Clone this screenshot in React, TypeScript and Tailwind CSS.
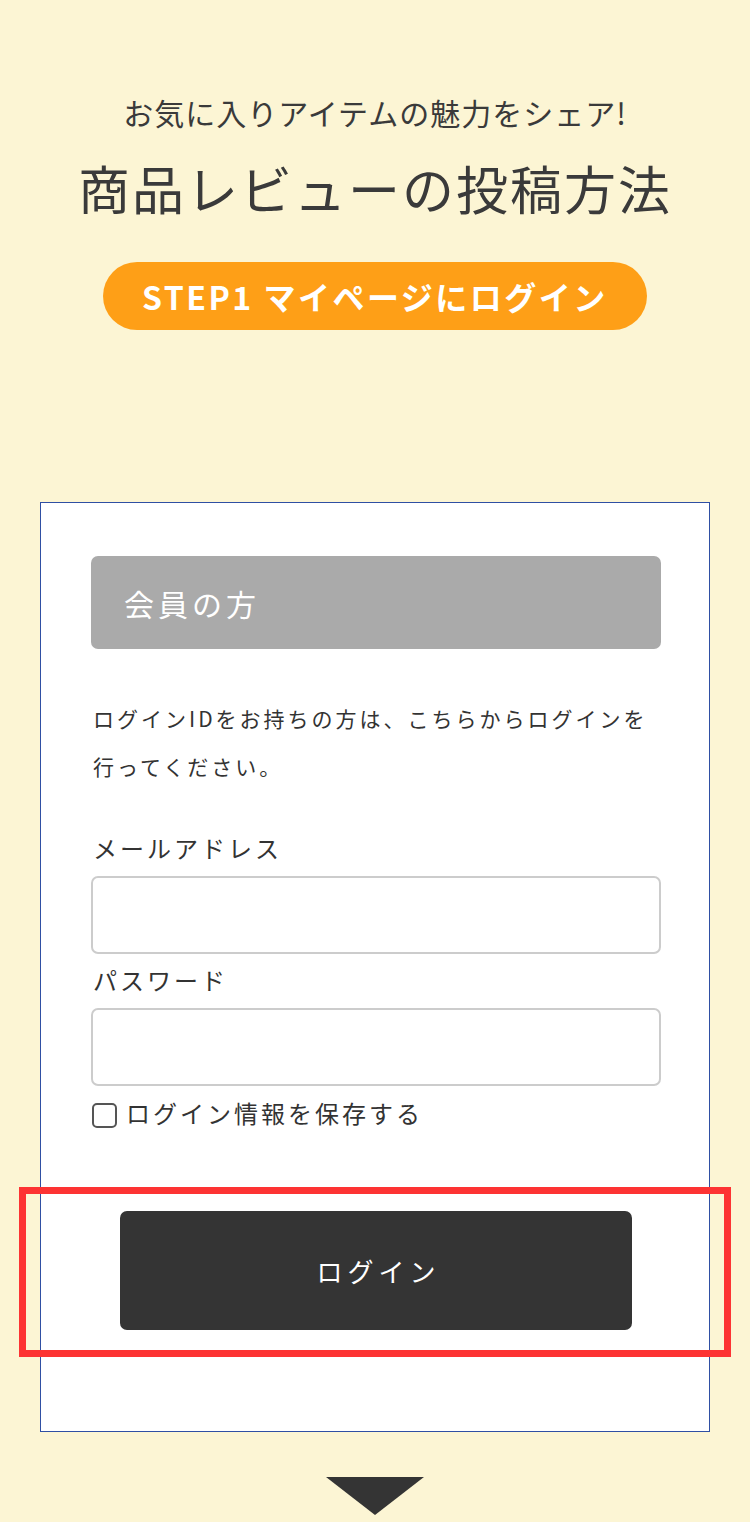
import React from "react";

const sans = { fontFamily: '"Noto Sans CJK JP", "Noto Sans", sans-serif' };

export default function App() {
  return (
    <div
      className="w-[750px] min-h-[1522px] bg-[#fcf5d4] text-[#333] flex flex-col items-center overflow-hidden"
      style={sans}
    >
      <p className="mt-[92px] text-[30px] leading-[40px] tracking-[1px] text-[#3a3a3a]">
        お気に入りアイテムの魅力をシェア!
      </p>
      <h1 className="mt-[22px] text-[52px] leading-[68px] tracking-[2px] text-[#3a3a3a]">
        商品レビューの投稿方法
      </h1>
      <div className="mt-[40px] w-[544px] h-[68px] rounded-full bg-[#fe9f17] flex items-center justify-center">
        <span className="text-white font-bold text-[32px] tracking-[2.5px] leading-none">
          STEP1 マイページにログイン
        </span>
      </div>

      <div className="mt-[172px] w-[670px] bg-white border border-[#2f4fa3] pt-[53px] pl-[50px] pr-[48px] pb-[101px] flex flex-col">
        <div className="h-[93px] rounded-[7px] bg-[#aaaaaa] flex items-center pl-[33px]">
          <span className="text-white text-[30px] tracking-[4px] leading-none">会員の方</span>
        </div>
        <p className="mt-[45px] pl-[2px] text-[21px] leading-[48px] tracking-[3px]">
          ログインIDをお持ちの方は、こちらからログインを行ってください。
        </p>
        <label className="mt-[40px] pl-[2px] text-[24px] leading-[36px] tracking-[3px]">
          メールアドレス
        </label>
        <input
          type="text"
          className="mt-[10px] h-[78px] rounded-[7px] border-2 border-[#cccccc] bg-white outline-none"
        />
        <label className="mt-[8px] pl-[2px] text-[24px] leading-[36px] tracking-[3px]">
          パスワード
        </label>
        <input
          type="password"
          className="mt-[10px] h-[78px] rounded-[7px] border-2 border-[#cccccc] bg-white outline-none"
        />
        <div className="mt-[9px] flex items-center h-[36px]">
          <span className="ml-[1px] w-[25px] h-[25px] rounded-[5px] border-2 border-[#555] bg-white mt-[4px]" />
          <span className="ml-[9px] text-[24px] leading-[36px] tracking-[3px]">ログイン情報を保存する</span>
        </div>

        <div className="relative mt-[80px] mx-auto w-[512px]">
          <div className="h-[119px] rounded-[7px] bg-[#343434] flex items-center justify-center">
            <span className="text-white text-[26px] tracking-[5px] leading-none pl-[5px]">ログイン</span>
          </div>
          <div className="absolute top-[-24px] bottom-[-27px] left-[-101px] right-[-99px] border-[7px] border-[#fd3333] pointer-events-none" />
        </div>
      </div>

      <svg className="mt-[45px]" width="98" height="38" viewBox="0 0 98 38">
        <polygon points="0,0 98,0 49,38" fill="#343434" />
      </svg>
    </div>
  );
}
